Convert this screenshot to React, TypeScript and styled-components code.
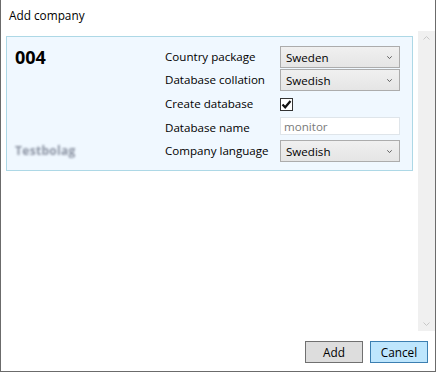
import { FunctionComponent } from 'react';
import styled, { createGlobalStyle } from 'styled-components';

const GlobalStyle = createGlobalStyle`
    html, body {
        margin: 0;
        padding: 0;
        background: #ffffff;
    }
    body {
        font-family: 'Segoe UI', 'Open Sans', 'Noto Sans', sans-serif;
        font-size: 11.6px;
        color: #000000;
    }
`;

const Window = styled.div`
    width: 436px;
    height: 372px;
    box-sizing: border-box;
    border: 1px solid #6b6b6b;
    border-top: none;
    background: #ffffff;
    display: flex;
    flex-direction: column;
`;

const TitleBar = styled.div`
    height: 31px;
    padding-left: 8px;
    display: flex;
    align-items: center;
    font-size: 11.8px;
    box-sizing: border-box;
    padding-bottom: 1px;
`;

const Body = styled.div`
    flex: 1;
    display: flex;
    flex-direction: row;
    min-height: 0;
`;

const Content = styled.div`
    flex: 1;
    padding: 5px 5px 0 5px;
`;

const Panel = styled.div`
    background: #f0f8ff;
    border: 1px solid #add8e6;
    padding: 9px 12px 8px 8px;
    display: grid;
    grid-template-columns: 150px 115px 120px;
`;

const InfoColumn = styled.div`
    display: flex;
    flex-direction: column;
    justify-content: space-between;
`;

const CompanyNumber = styled.div`
    font-size: 18px;
    font-weight: 700;
    line-height: 22px;
`;

const BlurredName = styled.div`
    font-size: 12px;
    font-weight: 700;
    line-height: 22px;
    color: #8a92a2;
    filter: blur(1.1px);
    letter-spacing: 0.3px;
`;

const Form = styled.div`
    grid-column: 2 / span 2;
    display: grid;
    grid-template-columns: 115px 120px;
    grid-template-rows: 22px 22px 24px 22px 22px;
    row-gap: 1px;
    align-items: center;
`;

const Label = styled.div`
    font-size: 11.6px;
    line-height: 16px;
`;

const Combo = styled.div`
    height: 22px;
    box-sizing: border-box;
    border: 1px solid #acacac;
    background: linear-gradient(#f0f0f0, #e5e5e5);
    display: flex;
    align-items: center;
    justify-content: space-between;
    padding: 0 7px 0 5px;
    font-size: 11.6px;
`;

const CheckBox = styled.div`
    width: 13px;
    height: 13px;
    box-sizing: border-box;
    border: 1px solid #333333;
    background: #ffffff;
    display: flex;
    align-items: center;
    justify-content: center;
`;

const TextBox = styled.div`
    align-self: start;
    height: 18px;
    box-sizing: border-box;
    border: 1px solid #dfe5ea;
    background: #ffffff;
    color: #7a7a7a;
    padding: 0 3px;
    display: flex;
    align-items: center;
    font-size: 11.6px;
`;

const ScrollBar = styled.div`
    width: 17px;
    background: #f0f0f0;
    display: flex;
    flex-direction: column;
    justify-content: space-between;
    align-items: center;
    padding: 5px 0;
`;

const Footer = styled.div`
    height: 40px;
    display: flex;
    justify-content: flex-end;
    align-items: flex-start;
    gap: 7px;
    padding: 10px 7px 0 0;
    box-sizing: border-box;
`;

const Button = styled.button<{ primary?: boolean }>`
    width: 58px;
    height: 22px;
    box-sizing: border-box;
    font-family: inherit;
    font-size: 11.8px;
    color: #000000;
    padding: 0;
    background: ${({ primary }) => (primary ? '#bee6fd' : '#dddddd')};
    border: 1px solid ${({ primary }) => (primary ? '#3c7fb1' : '#707070')};
`;

const Chevron: FunctionComponent<{ up?: boolean; color: string }> = ({ up, color }) => (
    <svg width="7" height="4" viewBox="0 0 7 4">
        <path
            d={up ? 'M0.5 3.5 L3.5 0.5 L6.5 3.5' : 'M0.5 0.5 L3.5 3.5 L6.5 0.5'}
            fill="none"
            stroke={color}
            strokeWidth="1"
        />
    </svg>
);

const ComboBox: FunctionComponent<{ value: string }> = ({ value }) => (
    <Combo>
        <span>{value}</span>
        <svg width="5" height="3" viewBox="0 0 5 3">
            <path d="M0.3 0.3 L2.5 2.6 L4.7 0.3" fill="none" stroke="#606060" strokeWidth="1" />
        </svg>
    </Combo>
);

const App: FunctionComponent = () => {
    return (
        <>
            <GlobalStyle />
            <Window>
                <TitleBar>Add company</TitleBar>
                <Body>
                    <Content>
                        <Panel>
                            <InfoColumn>
                                <CompanyNumber>004</CompanyNumber>
                                <BlurredName>Testbolag</BlurredName>
                            </InfoColumn>
                            <Form>
                                <Label>Country package</Label>
                                <ComboBox value="Sweden" />
                                <Label>Database collation</Label>
                                <ComboBox value="Swedish" />
                                <Label>Create database</Label>
                                <CheckBox>
                                    <svg width="11" height="11" viewBox="0 0 11 11">
                                        <path
                                            d="M1.5 5.5 L4.2 8.3 L9.5 2"
                                            fill="none"
                                            stroke="#111111"
                                            strokeWidth="2.2"
                                        />
                                    </svg>
                                </CheckBox>
                                <Label>Database name</Label>
                                <TextBox>monitor</TextBox>
                                <Label>Company language</Label>
                                <ComboBox value="Swedish" />
                            </Form>
                        </Panel>
                    </Content>
                    <ScrollBar>
                        <Chevron up color="#c8c8c8" />
                        <Chevron color="#c8c8c8" />
                    </ScrollBar>
                </Body>
                <Footer>
                    <Button>Add</Button>
                    <Button primary>Cancel</Button>
                </Footer>
            </Window>
        </>
    );
};

export default App;
